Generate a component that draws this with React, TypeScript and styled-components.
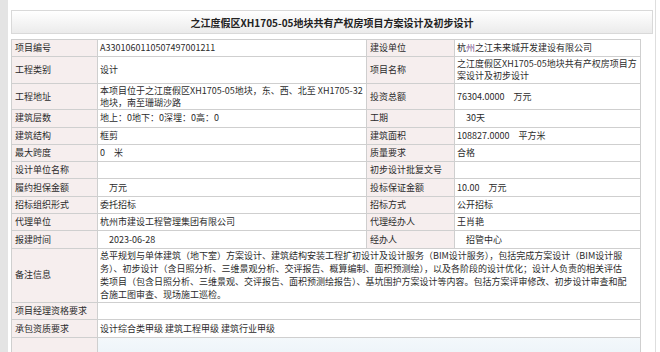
import React from "react";
import styled, { createGlobalStyle } from "styled-components";

const Global = createGlobalStyle`
  html, body { margin: 0; padding: 0; background: #fff; overflow: hidden; }
  * { box-sizing: border-box; }
`;

const Page = styled.div`
  display: flex;
  width: 660px;
  height: 352px;
  overflow: hidden;
  background: #fff;
  font-family: "Noto Sans CJK SC", sans-serif;
  color: #2b2b2b;
`;

const LeftRail = styled.div`
  flex: none;
  width: 8px;
  background: #e4e4e4;
`;

const RightRail = styled.div`
  flex: none;
  width: 5px;
  border-left: 1px solid #dedede;
`;

const Main = styled.div`
  flex: 1;
  min-width: 0;
  display: flex;
  flex-direction: column;
  padding: 10px 0 0 3px;
`;

const TitleBar = styled.div`
  flex: none;
  height: 24px;
  margin-right: 2px;
  border: 1px solid #d9d9d9;
  background: linear-gradient(#ffffff, #ebebeb);
  display: flex;
  align-items: center;
  justify-content: center;
  font-size: 10px;
  font-weight: 700;
  color: #222;
`;

const Grid = styled.div`
  flex: none;
  margin-top: 5px;
  width: 630px;
  display: grid;
  grid-template-columns: 85px 268px 87px 185px;
  gap: 1px;
  padding: 1px;
  background: #cfcfcf;
  font-size: 9px;
`;

type Kind = "label" | "value" | "blank";

const Cell = styled.div<{ $kind: Kind; $span?: number; $tall?: boolean }>`
  grid-column: span ${(p) => p.$span ?? 1};
  min-height: ${(p) => (p.$kind === "blank" ? "30px" : "16.3px")};
  display: flex;
  align-items: center;
  padding: 0.75px 2px;
  padding-left: ${(p) => (p.$kind === "label" ? "3px" : "2px")};
  line-height: ${(p) => (p.$tall ? "13px" : "12px")};
  white-space: pre;
  background: ${(p) =>
    p.$kind === "label"
      ? "#f6eeee"
      : p.$kind === "blank"
      ? "linear-gradient(#f3f8fb, #e9f1f7)"
      : "#ffffff"};
`;

const Tint = styled.span`
  color: #7d5590;
`;

type Row = [string, React.ReactNode, string?, React.ReactNode?];

const rows: Row[] = [
  ["项目编号", "A3301060110507497001211", "建设单位", <>杭<Tint>州</Tint>之江未来城开发建设有限公司</>],
  ["工程类别", "设计", "项目名称", "之江度假区XH1705-05地块共有产权房项目方\n案设计及初步设计"],
  ["工程地址", "本项目位于之江度假区XH1705-05地块，东、西、北至 XH1705-32\n地块，南至珊瑚沙路", "投资总额", "76304.0000\u3000万元"],
  ["建筑层数", "地上：0地下：0深埋：0高：0", "工期", "\u300030天"],
  ["建筑结构", "框剪", "建筑面积", "108827.0000\u3000平方米"],
  ["最大跨度", "0\u3000米", "质量要求", "合格"],
  ["设计单位名称", "", "初步设计批复文号", ""],
  ["履约担保金额", "\u3000万元", "投标保证金额", "10.00\u3000万元"],
  ["招标组织形式", "委托招标", "招标方式", "公开招标"],
  ["代理单位", "杭州市建设工程管理集团有限公司", "代理经办人", "王肖艳"],
  ["报建时间", "\u30002023-06-28", "经办人", "\u3000招管中心"],
];

const remarks =
  "总平规划与单体建筑（地下室）方案设计、建筑结构安装工程扩初设计及设计服务（BIM设计服务），包括完成方案设计（BIM设计服\n" +
  "务）、初步设计（含日照分析、三维景观分析、交评报告、概算编制、面积预测绘），以及各阶段的设计优化；设计人负责的相关评估\n" +
  "类项目（包含日照分析、三维景观、交评报告、面积预测绘报告）、基坑围护方案设计等内容。包括方案评审修改、初步设计审查和配\n" +
  "合施工图审查、现场施工巡检。";

export default function App() {
  return (
    <>
      <Global />
      <Page>
        <LeftRail />
        <Main>
          <TitleBar>之江度假区XH1705-05地块共有产权房项目方案设计及初步设计</TitleBar>
          <Grid>
            {rows.map(([l1, v1, l2, v2]) => (
              <React.Fragment key={l1}>
                <Cell $kind="label">{l1}</Cell>
                <Cell $kind="value">{v1}</Cell>
                <Cell $kind="label">{l2}</Cell>
                <Cell $kind="value">{v2}</Cell>
              </React.Fragment>
            ))}
            <Cell $kind="label">备注信息</Cell>
            <Cell $kind="value" $span={3} $tall>
              {remarks}
            </Cell>
            <Cell $kind="label">项目经理资格要求</Cell>
            <Cell $kind="value" $span={3}></Cell>
            <Cell $kind="label">承包资质要求</Cell>
            <Cell $kind="value" $span={3}>设计综合类甲级 建筑工程甲级 建筑行业甲级</Cell>
            <Cell $kind="label"></Cell>
            <Cell $kind="blank" $span={3}></Cell>
          </Grid>
        </Main>
        <RightRail />
      </Page>
    </>
  );
}
